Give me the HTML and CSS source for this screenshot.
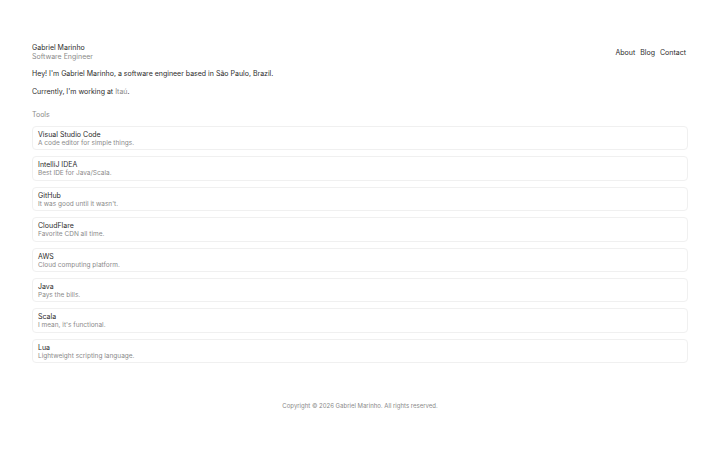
FILE: index.html
```html
<!DOCTYPE html>
<html lang="en">
<head>
<meta charset="utf-8">
<title>Gabriel Marinho</title>
<link rel="stylesheet" href="styles.css">
</head>
<body>
<div class="page">
  <header class="header">
    <div class="brand">
      <div class="name">Gabriel Marinho</div>
      <div class="role">Software Engineer</div>
    </div>
    <nav class="nav">
      <a href="#">About</a>
      <a href="#">Blog</a>
      <a href="#">Contact</a>
    </nav>
  </header>
  <main>
    <p class="intro">Hey! I'm Gabriel Marinho, a software engineer based in São Paulo, Brazil.</p>
    <p class="intro">Currently, I'm working at <a class="muted-link" href="#">Itaú</a>.</p>
    <h2 class="section-title">Tools</h2>
    <ul class="tools">
      <li class="tool"><div class="tool-name">Visual Studio Code</div><div class="tool-desc">A code editor for simple things.</div></li>
      <li class="tool"><div class="tool-name">IntelliJ IDEA</div><div class="tool-desc">Best IDE for Java/Scala.</div></li>
      <li class="tool"><div class="tool-name">GitHub</div><div class="tool-desc">It was good until it wasn't.</div></li>
      <li class="tool"><div class="tool-name">CloudFlare</div><div class="tool-desc">Favorite CDN all time.</div></li>
      <li class="tool"><div class="tool-name">AWS</div><div class="tool-desc">Cloud computing platform.</div></li>
      <li class="tool"><div class="tool-name">Java</div><div class="tool-desc">Pays the bills.</div></li>
      <li class="tool"><div class="tool-name">Scala</div><div class="tool-desc">I mean, it's functional.</div></li>
      <li class="tool"><div class="tool-name">Lua</div><div class="tool-desc">Lightweight scripting language.</div></li>
    </ul>
  </main>
  <footer class="footer">Copyright © 2026 Gabriel Marinho. All rights reserved.</footer>
</div>
</body>
</html>
```

FILE: styles.css
```css
* { box-sizing: border-box; }
html, body { margin: 0; padding: 0; background: #fff; }
body {
  font-family: Inter, "Liberation Sans", sans-serif;
  color: #2b2b2b;
  font-size: 7px;
  line-height: 9px;
}
.page {
  padding: 43px 32px 0 32px;
}
.header {
  display: flex;
  justify-content: space-between;
  align-items: center;
}
.name { color: #2b2b2b; }
.role { color: #8a8a8a; }
.nav { display: flex; gap: 5px; padding-right: 2px; }
.nav a { color: #2b2b2b; text-decoration: none; }
.intro { margin: 0; }
.intro:first-of-type { margin-top: 8px; }
.intro + .intro { margin-top: 9px; }
.muted-link { color: #8a8a8a; text-decoration: none; }
.section-title {
  margin: 14px 0 0;
  font-size: 7px;
  font-weight: 400;
  color: #8a8a8a;
}
.tools {
  list-style: none;
  margin: 7px 0 0;
  padding: 0;
  display: flex;
  flex-direction: column;
  gap: 6px;
}
.tool {
  border: 1px solid #f0f0f0;
  border-radius: 4px;
  padding: 3px 5px 2px;
  height: 24.4px;
}
.tool-name { color: #2b2b2b; }
.tool-desc { color: #8a8a8a; font-size: 6.5px; line-height: 9px; }
.footer {
  margin-top: 38px;
  text-align: center;
  color: #8a8a8a;
  font-size: 6px;
}
```
